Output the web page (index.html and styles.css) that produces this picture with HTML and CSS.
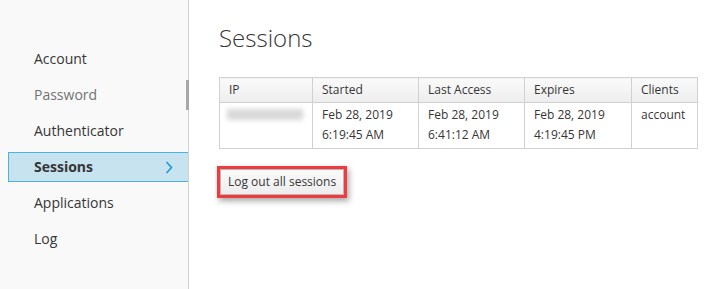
FILE: index.html
```html
<!DOCTYPE html>
<html>
<head>
<meta charset="utf-8">
<link rel="stylesheet" href="styles.css">
</head>
<body>
<div class="page">
  <aside class="sidebar">
    <ul class="nav">
      <li><a class="nav-link">Account</a></li>
      <li><a class="nav-link muted">Password</a></li>
      <li><a class="nav-link">Authenticator</a></li>
      <li><a class="nav-link active">Sessions
        <svg class="chev" width="8" height="13" viewBox="0 0 8 13"><path d="M1.5 1 L6.5 6.5 L1.5 12" fill="none" stroke="#1c98d8" stroke-width="1.6"/></svg>
      </a></li>
      <li><a class="nav-link">Applications</a></li>
      <li><a class="nav-link">Log</a></li>
    </ul>
    <div class="thumb"></div>
  </aside>
  <main class="main">
    <h1 class="title">Sessions</h1>
    <table class="sessions">
      <thead>
        <tr>
          <th class="c-ip">IP</th>
          <th class="c-date">Started</th>
          <th class="c-date">Last Access</th>
          <th class="c-exp">Expires</th>
          <th class="c-cl">Clients</th>
        </tr>
      </thead>
      <tbody>
        <tr>
          <td><div class="blur"></div></td>
          <td>Feb 28, 2019<br>6:19:45 AM</td>
          <td>Feb 28, 2019<br>6:41:12 AM</td>
          <td>Feb 28, 2019<br>4:19:45 PM</td>
          <td>account</td>
        </tr>
      </tbody>
    </table>
    <div class="actions">
      <span class="highlight"><button class="btn">Log out all sessions</button></span>
    </div>
  </main>
</div>
</body>
</html>
```
FILE: styles.css
```css
* { box-sizing: border-box; }
html, body { margin: 0; padding: 0; background: #fff; }
body {
  font-family: "Open Sans", "Liberation Sans", sans-serif;
  font-size: 12px;
  line-height: 20px;
  color: #363636;
}
.page {
  display: flex;
  height: 289px;
  overflow: hidden;
}
.sidebar {
  position: relative;
  width: 189px;
  flex: none;
  background: #f9f9f9;
  border-right: 1px solid #d1d1d1;
}
.nav {
  list-style: none;
  margin: 0;
  padding: 44px 0 0 8px;
  display: flex;
  flex-direction: column;
  gap: 6px;
}
.nav-link {
  display: flex;
  align-items: center;
  justify-content: space-between;
  height: 30px;
  padding: 0 15px 0 25px;
  border: 1px solid transparent;
  border-right: 0;
  font-size: 14px;
  color: #363636;
}
.nav-link.muted { color: #727272; }
.nav-link.active {
  background: #c6e3ef;
  border-color: #4eb2e1;
  font-weight: 700;
}
.chev { display: block; }
.thumb {
  position: absolute;
  left: 186px;
  top: 80px;
  width: 3px;
  height: 30px;
  background: #a8a8a8;
}
.main {
  flex: 1 1 auto;
  min-width: 0;
  padding: 25px 0 0 30px;
}
.title {
  margin: 0 0 26px;
  font-size: 24px;
  line-height: 26px;
  font-weight: 300;
  color: #363636;
}
.sessions {
  border-collapse: collapse;
  border-spacing: 0;
}
.sessions th, .sessions td {
  box-sizing: content-box;
  border: 1px solid #d1d1d1;
  padding: 2px 9px;
  text-align: left;
  vertical-align: top;
  font-weight: 400;
  white-space: nowrap;
}
.sessions th.c-ip { width: 74px; min-width: 74px; }
.sessions th.c-date { width: 87px; min-width: 87px; }
.sessions th.c-exp { width: 88px; min-width: 88px; }
.sessions th.c-cl { width: 47px; min-width: 47px; }
.sessions th {
  background: linear-gradient(#fafafa, #ededed);
}
.sessions td { padding-bottom: 3px; }
.blur {
  margin: 4px 0 0 -2px;
  width: 76px;
  height: 11px;
  background: #d8d8d8;
  filter: blur(2.5px);
}
.actions {
  margin-top: 17px;
  display: flex;
}
.highlight {
  display: inline-flex;
  margin-left: -2px;
  border: 3px solid #f03a3e;
  box-shadow: 2px 3px 6px rgba(0, 0, 0, 0.35);
}
.btn {
  font-family: inherit;
  font-size: 12px;
  color: #363636;
  height: 26px;
  line-height: 22px;
  padding: 0 7px;
  margin: 0;
  border: 1px solid #b7b7b7;
  background: linear-gradient(#fafafa, #ededed);
  border-radius: 0;
}
```
